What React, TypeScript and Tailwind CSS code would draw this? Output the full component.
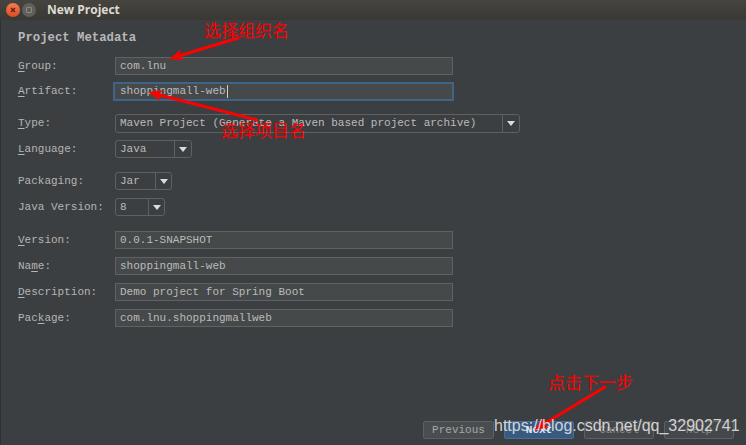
import React from "react";

function Arrow({ x1, y1, x2, y2 }: { x1: number; y1: number; x2: number; y2: number }) {
  const dx = x2 - x1;
  const dy = y2 - y1;
  const len = Math.hypot(dx, dy);
  const ux = dx / len;
  const uy = dy / len;
  const hl = 14;
  const hw = 5.5;
  const bx = x2 - ux * hl;
  const by = y2 - uy * hl;
  const px = -uy;
  const py = ux;
  const pts = `${x2},${y2} ${bx + px * hw},${by + py * hw} ${bx + ux * 3},${by + uy * 3} ${bx - px * hw},${by - py * hw}`;
  return (
    <g>
      <line x1={x1} y1={y1} x2={bx + ux * 3} y2={by + uy * 3} stroke="#ff0000" strokeWidth={3} strokeLinecap="round" />
      <polygon points={pts} fill="#ff0000" />
    </g>
  );
}

function Label({ pre = "", u = "", post = "" }: { pre?: string; u?: string; post?: string }) {
  return (
    <div className="w-[97px] shrink-0 text-[#b4b4b4] whitespace-pre">
      {pre}
      {u && <span className="underline underline-offset-2">{u}</span>}
      {post}
    </div>
  );
}

function Field({ value }: { value: string }) {
  return (
    <div className="w-[338px] h-full bg-[#45494a] border border-[#5f6264] flex items-center pl-[4px] text-[#bbbbbb] whitespace-pre">
      {value}
    </div>
  );
}

function Combo({ value, w, aw }: { value: string; w: string; aw: string }) {
  return (
    <div className={`${w} h-full flex border border-[#5e6163] rounded-[3px] bg-[#3c3f41] text-[#bbbbbb]`}>
      <div className="flex-1 flex items-center pl-[4px] whitespace-pre overflow-hidden">{value}</div>
      <div className={`${aw} h-full border-l border-[#5e6163] flex items-center justify-center`}>
        <svg width="8" height="5" viewBox="0 0 8 5">
          <polygon points="0,0 8,0 4,5" fill="#dcdcdc" />
        </svg>
      </div>
    </div>
  );
}

export default function App() {
  return (
    <div className="w-[746px] h-[445px] bg-[#3c3f41] flex flex-col relative overflow-hidden font-['Liberation_Mono',monospace] text-[11px] leading-none">
      {/* title bar */}
      <div className="h-[20px] shrink-0 bg-gradient-to-b from-[#45443f] to-[#393834] flex items-center pl-[6px]">
        <div className="w-[14px] h-[14px] rounded-full bg-gradient-to-b from-[#f27b53] to-[#df4a1f] flex items-center justify-center">
          <svg width="6" height="6" viewBox="0 0 6 6">
            <path d="M1 1 L5 5 M5 1 L1 5" stroke="#5a2010" strokeWidth="1.3" />
          </svg>
        </div>
        <div className="ml-[2px] w-[14px] h-[14px] rounded-full bg-[#605f5a] flex items-center justify-center">
          <div className="w-[6px] h-[6px] border border-[#8d8b85] rounded-[1px]" />
        </div>
        <div className="ml-[11px] font-['Open_Sans',sans-serif] font-bold text-[12px] text-[#dfdbd2]">New Project</div>
      </div>

      <div className="flex-1 flex flex-col border-l border-[#2f3031]">
        <div className="mt-[10px] h-[16px] flex items-center pl-[17px] text-[12.3px] font-bold text-[#b8b8b8]">Project Metadata</div>

        <div className="flex flex-col pl-[17px]">
          <div className="mt-[11px] h-[18px] flex items-center">
            <Label u="G" post="roup:" />
            <Field value="com.lnu" />
          </div>
          <div className="mt-[7px] h-[19px] flex items-center">
            <Label u="A" post="rtifact:" />
            <div className="-ml-[2px] w-[341px] h-full bg-[#45494a] border-2 border-[#3e6489] flex items-center pl-[5px] text-[#bbbbbb] whitespace-pre">
              shoppingmall-web
              <span className="ml-[1px] w-px h-[13px] bg-[#d0d0d0]" />
            </div>
          </div>
          <div className="mt-[13px] h-[19px] flex items-center">
            <Label u="T" post="ype:" />
            <Combo value="Maven Project (Generate a Maven based project archive)" w="w-[405px]" aw="w-[17px]" />
          </div>
          <div className="mt-[7px] h-[18px] flex items-center">
            <Label u="L" post="anguage:" />
            <Combo value="Java" w="w-[77px]" aw="w-[17px]" />
          </div>
          <div className="mt-[14px] h-[18px] flex items-center">
            <Label pre="Packaging:" />
            <Combo value="Jar" w="w-[57px]" aw="w-[16px]" />
          </div>
          <div className="mt-[8px] h-[18px] flex items-center">
            <Label pre="Java Version:" />
            <Combo value="8" w="w-[50px]" aw="w-[16px]" />
          </div>
          <div className="mt-[15px] h-[18px] flex items-center">
            <Label u="V" post="ersion:" />
            <Field value="0.0.1-SNAPSHOT" />
          </div>
          <div className="mt-[8px] h-[18px] flex items-center">
            <Label pre="Na" u="m" post="e:" />
            <Field value="shoppingmall-web" />
          </div>
          <div className="mt-[8px] h-[18px] flex items-center">
            <Label u="D" post="escription:" />
            <Field value="Demo project for Spring Boot" />
          </div>
          <div className="mt-[8px] h-[18px] flex items-center">
            <Label pre="Pac" u="k" post="age:" />
            <Field value="com.lnu.shoppingmallweb" />
          </div>
        </div>

        <div className="flex-1" />

        <div className="flex justify-end gap-[10px] pr-[12px] mb-[6px]">
          <div className="w-[71px] h-[18px] bg-[#4a4d4f] border border-[#5d6062] rounded-[2px] flex items-center justify-center text-[#a8a8a8]">Previous</div>
          <div className="w-[70px] h-[18px] bg-[#385a81] border border-[#4a6d93] rounded-[2px] flex items-center justify-center text-[#e0e6ee] font-bold">Next</div>
          <div className="w-[70px] h-[18px] bg-[#45484a] border border-[#5d6062] rounded-[2px] flex items-center justify-center text-[#8a8a8a]">Cancel</div>
          <div className="w-[70px] h-[18px] bg-[#45484a] border border-[#5d6062] rounded-[2px] flex items-center justify-center text-[#8a8a8a]">Help</div>
        </div>
      </div>

      {/* annotations */}
      <svg className="absolute left-0 top-0 pointer-events-none" width="746" height="445">
        <Arrow x1={238} y1={38} x2={169} y2={59} />
        <Arrow x1={257} y1={120} x2={148} y2={92} />
        <Arrow x1={605} y1={387} x2={534} y2={430} />
      </svg>
      <div className="absolute left-[204px] top-[21px] text-[17px] leading-none text-[#ff0000] font-['Noto_Sans_CJK_SC',sans-serif]">选择组织名</div>
      <div className="absolute left-[221px] top-[121px] text-[17px] leading-none text-[#ff0000] font-['Noto_Sans_CJK_SC',sans-serif]">选择项目名</div>
      <div className="absolute left-[548px] top-[373px] text-[17px] leading-none text-[#ff0000] font-['Noto_Sans_CJK_SC',sans-serif]">点击下一步</div>
      <div className="absolute left-[494px] top-[418px] text-[16px] leading-none text-[#e4e4e4]/90 font-['Liberation_Sans',sans-serif] whitespace-pre">https://blog.csdn.net/qq_32902741</div>
    </div>
  );
}
